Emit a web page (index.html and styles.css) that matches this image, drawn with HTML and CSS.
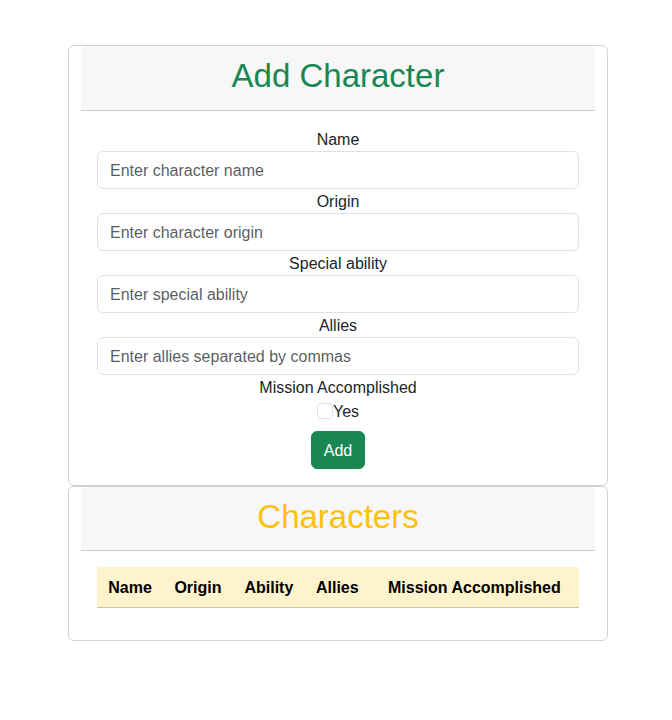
FILE: index.html
```html
<!DOCTYPE html>
<html lang="en">
<head>
<meta charset="utf-8">
<meta name="viewport" content="width=device-width, initial-scale=1">
<title>Characters</title>
<link rel="stylesheet" href="styles.css">
</head>
<body>
<main class="container">
  <section class="card">
    <header class="card-header"><h2 class="title title-success">Add Character</h2></header>
    <form class="card-body form">
      <label class="label" for="name">Name</label>
      <input class="control" id="name" type="text" placeholder="Enter character name">
      <label class="label" for="origin">Origin</label>
      <input class="control" id="origin" type="text" placeholder="Enter character origin">
      <label class="label" for="ability">Special ability</label>
      <input class="control" id="ability" type="text" placeholder="Enter special ability">
      <label class="label" for="allies">Allies</label>
      <input class="control" id="allies" type="text" placeholder="Enter allies separated by commas">
      <span class="label">Mission Accomplished</span>
      <div class="check">
        <input class="check-input" id="mission" type="checkbox">
        <label class="label" for="mission">Yes</label>
      </div>
      <button class="button" type="button">Add</button>
    </form>
  </section>
  <section class="card">
    <header class="card-header"><h2 class="title title-warning">Characters</h2></header>
    <div class="card-body">
      <table class="table">
        <thead>
          <tr><th>Name</th><th>Origin</th><th>Ability</th><th>Allies</th><th>Mission Accomplished</th></tr>
        </thead>
      </table>
    </div>
  </section>
</main>
</body>
</html>
```
FILE: styles.css
```css
*, *::before, *::after { box-sizing: border-box; }

body {
  margin: 0;
  padding: 45px 64px 0 68px;
  font-family: "Liberation Sans", Arial, sans-serif;
  font-size: 16px;
  line-height: 24px;
  color: #212529;
  background: #fff;
  text-align: center;
}

.container {
  max-width: 540px;
  margin: 0 auto;
}

.card {
  padding: 0 12px;
  border: 1px solid rgba(0, 0, 0, 0.176);
  border-radius: 6px;
}

.card-header {
  padding: 10px 16px 14px;
  background: rgba(0, 0, 0, 0.03);
  border-bottom: 1px solid rgba(0, 0, 0, 0.176);
  border-radius: 5px 5px 0 0;
}

.title {
  margin: 0;
  font-size: 33px;
  font-weight: 500;
  line-height: 1.2;
}

.title-success { color: #198754; }
.title-warning { color: #ffc107; }

.card-body { padding: 16px; }

.form {
  display: flex;
  flex-direction: column;
  align-items: center;
}

.label {
  padding-top: 2px;
  line-height: 22px;
}

.control {
  width: 100%;
  height: 38px;
  padding: 7px 12px 5px;
  border: 1px solid #dee2e6;
  border-radius: 6px;
  font: inherit;
  color: inherit;
}

.control::placeholder { color: rgba(33, 37, 41, 0.75); opacity: 1; }

.check {
  display: flex;
  align-items: center;
}

.check-input {
  width: 16px;
  height: 16px;
  margin: 0;
  appearance: none;
  border: 1px solid #dee2e6;
  border-radius: 4px;
}

.check-input:checked { background: #198754; }

.button {
  height: 38px;
  margin-top: 8px;
  padding: 7px 12px 5px;
  border: 1px solid #198754;
  border-radius: 6px;
  background: #198754;
  color: #fff;
  font: inherit;
}

.table {
  width: 100%;
  margin-bottom: 16px;
  border-collapse: collapse;
}

.table th {
  padding: 9px 8px 7px;
  background: #fff3cd;
  color: #000;
  border-bottom: 1px solid #ccc2a4;
}
```
